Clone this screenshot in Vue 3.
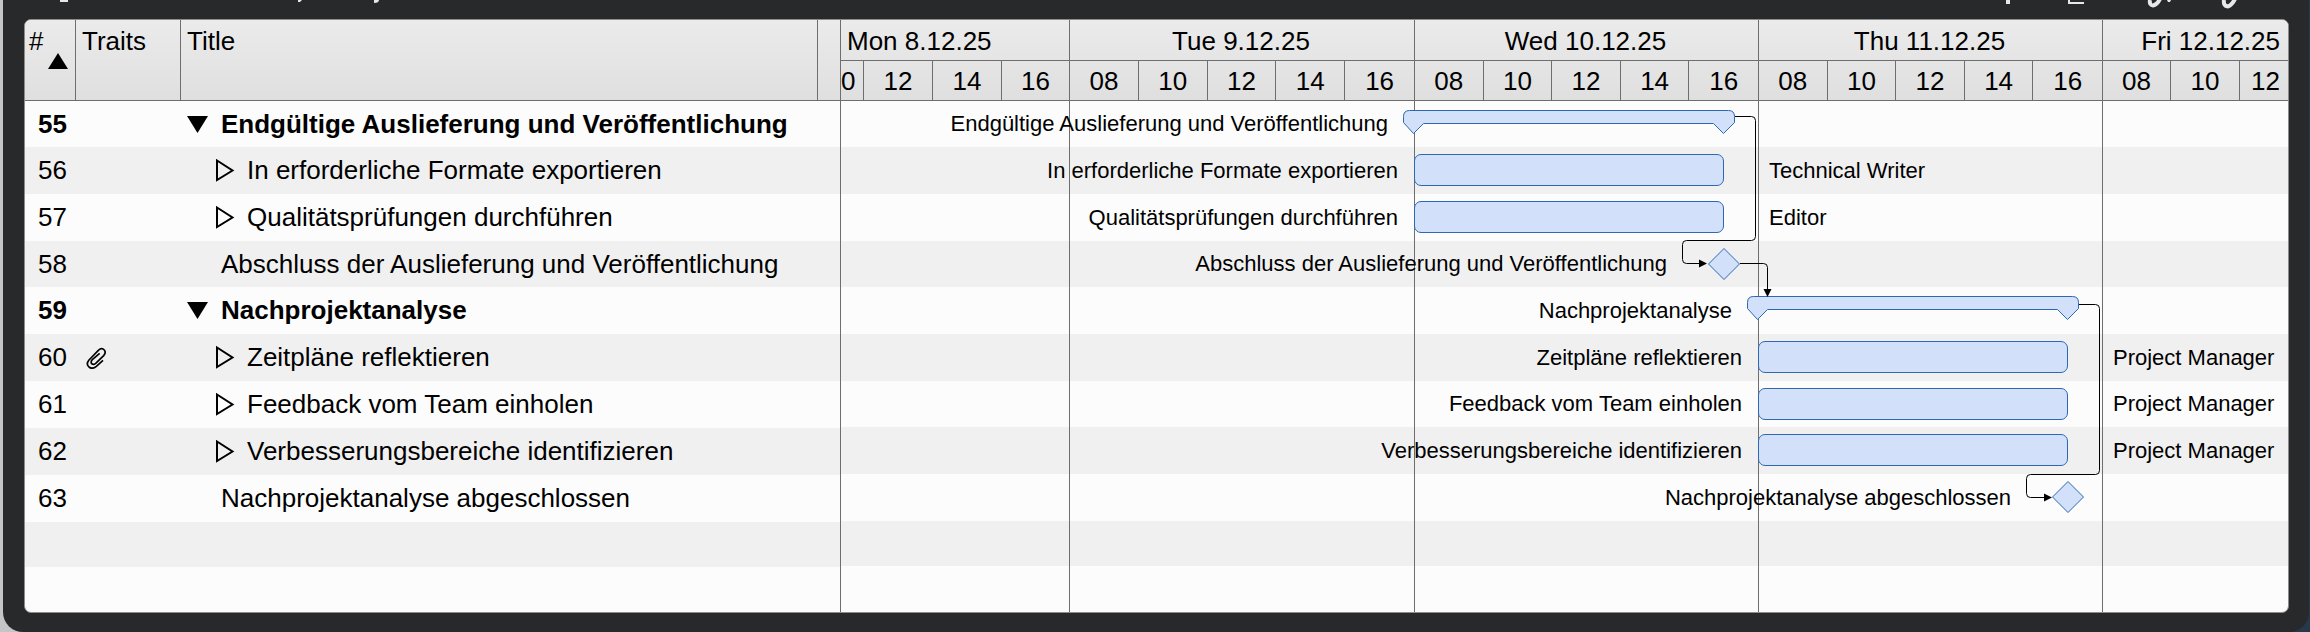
<script setup>
const days = [
  { label: 'Mon 8.12.25', kind: 'first', hours: ['0', '12', '14', '16'] },
  { label: 'Tue 9.12.25', kind: 'wide', hours: ['08', '10', '12', '14', '16'] },
  { label: 'Wed 10.12.25', kind: 'full', hours: ['08', '10', '12', '14', '16'] },
  { label: 'Thu 11.12.25', kind: 'full', hours: ['08', '10', '12', '14', '16'] },
  { label: 'Fri 12.12.25', kind: 'last', hours: ['08', '10', '12'] }
]

const wed = 573
const thu = 917
const span = 310

const tasks = [
  { id: 55, title: 'Endgültige Auslieferung und Veröffentlichung', type: 'group', start: wed },
  { id: 56, title: 'In erforderliche Formate exportieren', type: 'task', start: wed, who: 'Technical Writer' },
  { id: 57, title: 'Qualitätsprüfungen durchführen', type: 'task', start: wed, who: 'Editor' },
  { id: 58, title: 'Abschluss der Auslieferung und Veröffentlichung', type: 'milestone', start: wed },
  { id: 59, title: 'Nachprojektanalyse', type: 'group', start: thu },
  { id: 60, title: 'Zeitpläne reflektieren', type: 'task', start: thu, who: 'Project Manager', clip: true },
  { id: 61, title: 'Feedback vom Team einholen', type: 'task', start: thu, who: 'Project Manager' },
  { id: 62, title: 'Verbesserungsbereiche identifizieren', type: 'task', start: thu, who: 'Project Manager' },
  { id: 63, title: 'Nachprojektanalyse abgeschlossen', type: 'milestone', start: thu }
]

function labelEnd(t) {
  if (t.type === 'group') return t.start - 26
  if (t.type === 'task') return t.start - 16
  return t.start + span - 57
}
</script>

<template>
  <div class="desktop">
    <main class="window">
      <div class="toolbar" aria-hidden="true">
        <svg class="tools-left" width="400" height="12">
          <path d="M60 0h8v2h-8zM298 0h4l-2 2h-2zM374 0h5q0 3-5 3z" />
        </svg>
        <svg class="tools-right" width="260" height="12">
          <path d="M16 0h4v4h-4zM78 0h2v2h14v2h-16zM177 0h4l-1 2h-2z" />
          <path class="ring" d="M160 0Q159 5 163 5.500Q167 5 170 -1M234 0Q233 6 238 6.500Q242 5 245 -1" />
        </svg>
      </div>

      <div class="panel">
        <table class="outline">
          <thead>
            <tr>
              <th class="num">
                <button class="sort" type="button" aria-label="# sorted ascending">
                  <span>#</span>
                  <svg width="20" height="16"><path d="M10 0 20 16H0z" /></svg>
                </button>
              </th>
              <th class="traits">Traits</th>
              <th class="title">Title</th>
              <th class="gutter" aria-hidden="true"></th>
            </tr>
          </thead>
          <tbody>
            <tr v-for="t in tasks" :key="t.id" :class="t.type">
              <td class="num">{{ t.id }}</td>
              <td class="traits">
                <svg v-if="t.clip" class="clip" viewBox="29 27 63 66" width="21" height="22" role="img" aria-label="Attachment">
                  <path d="M80 67L60 85Q48 95 38 87Q28 78 38 66L66 37Q76 28 84 36Q90 44 82 53L58 76Q51 82 46 77Q42 72 48 65L70 46" />
                </svg>
              </td>
              <td class="title">
                <div class="cell">
                  <button v-if="t.type !== 'milestone'" class="toggle" type="button" :aria-label="'Toggle ' + t.title">
                    <svg v-if="t.type === 'group'" width="21" height="17"><path d="M0 0h21L10.500 17z" /></svg>
                    <svg v-else width="19" height="23"><path class="open" d="M1 1.500 16.500 11.500 1 21z" /></svg>
                  </button>
                  <span>{{ t.title }}</span>
                </div>
              </td>
              <td class="gutter"></td>
            </tr>
            <tr v-for="n in 2" :key="'empty' + n" class="empty"><td colspan="4"></td></tr>
          </tbody>
        </table>

        <section class="timeline" aria-label="Timeline">
          <header class="scale">
            <div v-for="d in days" :key="d.label" class="day" :class="d.kind">
              <div class="date">{{ d.label }}</div>
              <div class="hours"><span v-for="h in d.hours" :key="h">{{ h }}</span></div>
            </div>
          </header>
          <div class="chart">
            <div class="grid" aria-hidden="true">
              <i v-for="d in days" :key="d.label" class="day" :class="d.kind"></i>
            </div>
            <div v-for="t in tasks" :key="t.id" class="row">
              <span class="label" :style="{ width: labelEnd(t) + 'px' }">{{ t.title }}</span>
              <div v-if="t.type === 'task'" class="bar" :style="{ left: t.start + 'px', width: span + 'px' }"></div>
              <svg v-else-if="t.type === 'group'" class="group-bar" :style="{ left: t.start - 12 + 'px' }" width="334" height="46">
                <path d="M7.500 9.500H326.500Q332.500 9.500 332.500 15.500V21.500L321.500 32.500L311.500 22.500H21.500L11.500 32.500L1.500 21.500V15.500Q1.500 9.500 7.500 9.500Z" />
              </svg>
              <svg v-else class="diamond" :style="{ left: t.start + span - 17 + 'px' }" width="34" height="34">
                <path d="M17 1.500 32.500 17 17 32.500 1.500 17Z" />
              </svg>
              <span v-if="t.who" class="who" :style="{ left: t.start + 355 + 'px' }">{{ t.who }}</span>
            </div>
            <div class="row empty"></div>
            <div class="row empty"></div>
            <svg class="links" aria-hidden="true">
              <path d="M894 15.500H910.500Q914.500 15.500 914.500 19.500V135.500Q914.500 139.500 910.500 139.500H845.500Q841.500 139.500 841.500 143.500V158.500Q841.500 162.500 845.500 162.500H860" />
              <path d="M899 162.500H922.500Q926.500 162.500 926.500 166.500V190" />
              <path d="M1238 203.500H1254.500Q1258.500 203.500 1258.500 207.500V369.500Q1258.500 373.500 1254.500 373.500H1189.500Q1185.500 373.500 1185.500 377.500V392.500Q1185.500 396.500 1189.500 396.500H1204" />
              <path class="head" d="M858 158.500v8l8-4zM922.500 188h8l-4 8zM1203 392.500v8l8-4z" />
            </svg>
          </div>
        </section>
      </div>
    </main>
  </div>
</template>

<style>
body {
  margin: 0;
  background: #c4c5c7;
}
</style>

<style scoped>
* {
  box-sizing: border-box;
}
.desktop {
  min-height: 100vh;
  display: flex;
  padding: 0 1px 0 3px;
  background: linear-gradient(90deg, #c4c5c7 50%, #26384a 50%);
  font-family: "Liberation Sans", Arial, Helvetica, sans-serif;
  font-size: 26px;
  color: #000;
}
.window {
  flex: 1;
  min-width: 0;
  display: flex;
  flex-direction: column;
  background: #28292b;
  border-radius: 0 0 20px 20px;
  padding: 0 20px 19px 21px;
}
.toolbar {
  height: 19px;
  display: flex;
  justify-content: space-between;
  margin: 0 39px 0 -24px;
}
.toolbar svg {
  fill: #e8e8e8;
}
.toolbar .ring {
  fill: none;
  stroke: #e8e8e8;
  stroke-width: 4;
}
.panel {
  flex: 1;
  display: flex;
  overflow: hidden;
  border: 1px solid #8c8c8c;
  border-radius: 7px;
  background: #fcfcfc;
}
.outline {
  width: 816px;
  flex: none;
  border-collapse: separate;
  border-spacing: 0;
  table-layout: fixed;
  border-right: 1px solid #6e6e6e;
}
th,
td {
  padding: 0;
  text-align: left;
}
th {
  height: 81px;
  vertical-align: top;
  font-weight: 400;
  line-height: 28px;
  padding: 7px 0 0 6px;
  border-right: 1px solid #6e6e6e;
  border-bottom: 1px solid #6e6e6e;
}
thead,
.scale {
  background: linear-gradient(#ebebeb, #dfdfdf);
}
th.num {
  width: 51px;
  padding-left: 4px;
}
th.traits {
  width: 105px;
}
th.gutter {
  width: 22px;
  border-right: 0;
}
.sort {
  display: flex;
  flex-direction: column;
  width: 100%;
  padding: 0;
  border: 0;
  background: none;
  font: inherit;
  color: inherit;
  text-align: left;
}
.sort svg {
  align-self: flex-end;
  margin: -2px 7px 0 0;
}
tbody tr {
  height: 47px;
}
tbody tr:nth-child(3n + 1) {
  height: 46px;
}
tbody tr.empty {
  height: 45px;
}
tbody tr:nth-child(even) {
  background: #f0f0f0;
}
td.num {
  padding-left: 13px;
}
td.traits svg {
  display: block;
  margin-left: 10px;
}
.clip {
  fill: none;
  stroke: #000;
  stroke-width: 5;
}
tr.group {
  font-weight: 700;
}
.cell {
  display: flex;
  align-items: center;
  white-space: nowrap;
}
.group .cell {
  padding-left: 6px;
}
.task .cell {
  padding-left: 35px;
}
.milestone .cell {
  padding-left: 40px;
}
.toggle {
  display: flex;
  width: 34px;
  padding: 0;
  border: 0;
  background: none;
}
.task .toggle {
  width: 31px;
}
.open {
  fill: none;
  stroke: #000;
  stroke-width: 2;
}
.timeline {
  flex: 1;
  min-width: 0;
  overflow: hidden;
  display: flex;
  flex-direction: column;
}
.scale,
.grid {
  display: flex;
}
.day {
  flex: none;
  width: 344px;
  border-right: 1px solid #6e6e6e;
}
.day.wide {
  width: 345px;
}
.day.first {
  width: 229px;
}
.day.last {
  flex: 1;
  border-right: 0;
}
.scale {
  height: 81px;
  border-bottom: 1px solid #6e6e6e;
}
.date {
  height: 41px;
  padding: 7px 8px 0 6px;
  line-height: 28px;
  text-align: center;
  border-bottom: 1px solid #6e6e6e;
}
.first .date {
  text-align: left;
}
.last .date {
  text-align: right;
}
.hours {
  height: 39px;
  display: grid;
  grid-template-columns: repeat(5, 1fr);
  line-height: 40px;
  text-align: center;
}
.hours span {
  border-right: 1px solid #6e6e6e;
}
.hours span:last-child {
  border-right: 0;
}
.first .hours {
  grid-template-columns: 23px 69px 69px 1fr;
}
.first .hours span:first-child,
.last .hours span:last-child {
  text-align: right;
  padding-right: 8px;
}
.last .hours {
  grid-template-columns: 68px 69px 1fr;
}
.chart {
  flex: 1;
  position: relative;
  font-size: 22px;
}
.grid {
  position: absolute;
  inset: 0;
  z-index: 1;
}
.row {
  position: relative;
  height: 47px;
  display: flex;
  align-items: center;
}
.row:nth-child(3n + 2) {
  height: 46px;
}
.row.empty {
  height: 45px;
}
.row:nth-child(odd) {
  background: #f0f0f0;
}
.label {
  position: relative;
  z-index: 2;
  text-align: right;
  white-space: nowrap;
}
.bar {
  position: absolute;
  z-index: 2;
  top: 7px;
  height: 32px;
  background: #d2e0fa;
  border: 1px solid #2c68b4;
  border-radius: 7px;
}
.group-bar,
.diamond {
  position: absolute;
  z-index: 2;
  top: 0;
  fill: #d2e0fa;
  stroke: #2c68b4;
}
.diamond {
  top: 6px;
}
.who {
  position: absolute;
  z-index: 2;
  white-space: nowrap;
}
.links {
  position: absolute;
  z-index: 3;
  inset: 0;
  width: 100%;
  height: 100%;
  fill: none;
  stroke: #000;
}
.links .head {
  fill: #000;
  stroke: none;
}
</style>
